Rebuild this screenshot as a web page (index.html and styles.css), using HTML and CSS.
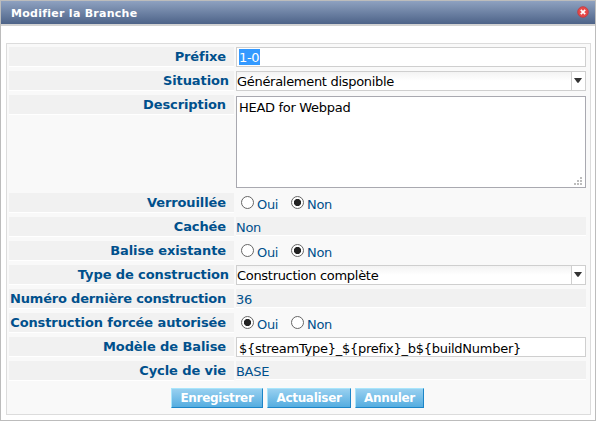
FILE: index.html
```html
<!DOCTYPE html>
<html lang="fr">
<head>
<meta charset="utf-8">
<title>Modifier la Branche</title>
<link rel="stylesheet" href="styles.css">
</head>
<body>
<div class="window">
  <header class="titlebar">
    <h1>Modifier la Branche</h1>
    <svg class="close" width="12" height="12" viewBox="0 0 12 12"><circle cx="6" cy="6" r="5.3" fill="#e64a4a" stroke="#c93538" stroke-width=".8"/><path d="M3.8 3.8l4.4 4.4M8.2 3.8L3.8 8.2" stroke="#fff" stroke-width="1.7"/></svg>
  </header>
  <main class="panel">
    <div class="form">
      <div class="label">Préfixe</div>
      <div class="field input"><span class="selected">1-0</span></div>

      <div class="label wide">Situation</div>
      <div class="field select"><span class="choice">Généralement disponible</span><span class="arrow"><svg width="8" height="5" viewBox="0 0 8 5"><path d="M0 0h8L4.6 4.8H3.4z" fill="#333"/></svg></span></div>

      <div class="label">Description</div>
      <div class="field textarea">HEAD for Webpad
        <svg class="grip" width="8" height="8" viewBox="0 0 8 8" fill="#bdbdbd"><path d="M6 0h2v2H6zM3 3h2v2H3zM6 3h2v2H6zM0 6h2v2H0zM3 6h2v2H3zM6 6h2v2H6z"/></svg>
      </div>

      <div class="label">Verrouillée</div>
      <div class="radios"><i class="radio"></i><span class="oui">Oui</span><i class="radio on"></i><span>Non</span></div>

      <div class="label">Cachée</div>
      <div class="value">Non</div>

      <div class="label">Balise existante</div>
      <div class="radios"><i class="radio"></i><span class="oui">Oui</span><i class="radio on"></i><span>Non</span></div>

      <div class="label wide">Type de construction</div>
      <div class="field select"><span class="choice">Construction complète</span><span class="arrow"><svg width="8" height="5" viewBox="0 0 8 5"><path d="M0 0h8L4.6 4.8H3.4z" fill="#333"/></svg></span></div>

      <div class="label long">Numéro dernière construction</div>
      <div class="value">36</div>

      <div class="label">Construction forcée autorisée</div>
      <div class="radios"><i class="radio on"></i><span class="oui">Oui</span><i class="radio"></i><span>Non</span></div>

      <div class="label">Modèle de Balise</div>
      <div class="field input template">${streamType}_${prefix}_b${buildNumber}</div>

      <div class="label">Cycle de vie</div>
      <div class="value">BASE</div>
    </div>
    <div class="actions">
      <button class="save">Enregistrer</button>
      <button class="refresh">Actualiser</button>
      <button class="cancel">Annuler</button>
    </div>
  </main>
</div>
</body>
</html>
```

FILE: styles.css
```css
* { box-sizing: border-box; }
body {
  margin: 0;
  background: #fff;
  color: #00508c;
  font: 13px/19px "DejaVu Sans", Verdana, sans-serif;
  letter-spacing: -.3px;
}
.window {
  width: 596px;
  height: 421px;
  border: 1px solid #bcbcbc;
}
.titlebar {
  display: flex;
  align-items: center;
  justify-content: space-between;
  height: 25px;
  padding: 0 6px 0 10px;
  border-bottom: 2px solid #d2d2d2;
  background: linear-gradient(#8ea1c0, #4d6388);
}
.titlebar h1 {
  margin: 3px 0 0;
  color: #fff;
  font-size: 11px;
  line-height: 16px;
  letter-spacing: .27px;
}
.close { margin-top: -2px; }
.panel {
  width: 585px;
  height: 372px;
  margin: 17px 0 0 5px;
  padding: 3px 4px 0 2px;
  border: 1px solid #dcdcdc;
  background: #f9f9f9;
}
.form {
  display: grid;
  grid-template-columns: 225px 350px;
  grid-template-rows: 20px 20px 94px repeat(8, 20px);
  gap: 4px 2px;
}
.label {
  height: 20px;
  padding-right: 8px;
  border-bottom: 1px solid #fff;
  background: #f1f1f1;
  font-weight: bold;
  text-align: right;
  white-space: nowrap;
  letter-spacing: -.1px;
}
.label.wide { padding-right: 5px; }
.label.long { letter-spacing: -.19px; }
.value {
  height: 19px;
  padding-top: 1px;
  border-bottom: 1px solid #fff;
  background: #f1f1f1;
}
.field {
  border: 1px solid #cfcfcf;
  background: #fff;
  color: #000;
  white-space: nowrap;
}
.input { padding: 1px 2px; }
.template { letter-spacing: -.27px; }
.selected {
  display: block;
  width: 21px;
  height: 16px;
  background: #3399ff;
  color: #fff;
  line-height: 17px;
}
.select {
  display: flex;
  background: linear-gradient(#f3f3f3, #fff 9px);
}
.choice { flex: 1; }
.arrow {
  display: flex;
  width: 14px;
  padding: 6px 0 0 2px;
  border-left: 1px solid #cfcfcf;
  background: #fff;
}
.arrow svg { display: block; }
.textarea {
  position: relative;
  height: 92px;
  margin-top: 1px;
  padding: 1px 2px;
  border-color: #a9a9b0;
}
.grip {
  position: absolute;
  right: 3px;
  bottom: 2px;
}
.radios { display: flex; padding-left: 5px; }
.radios span { margin-left: 3px; padding-top: 2px; }
.radios .oui { width: 34px; }
.radio {
  width: 13px;
  height: 13px;
  margin-top: 3px;
  border: 1px solid #666;
  border-radius: 50%;
  background: #fff;
}
.radio.on { background: radial-gradient(circle, #222 3.2px, #fff 4px); }
.actions {
  display: flex;
  gap: 4px;
  margin: 7px 0 0 162px;
}
.actions button {
  height: 20px;
  padding: 0;
  border: 1px solid;
  border-color: #a9e5fb #1c85c7 #1c85c7 #a9e5fb;
  background: linear-gradient(#98d0f0, #55ade0);
  color: #fff;
  font: bold 12px/18px "DejaVu Sans", Verdana, sans-serif;
  letter-spacing: -.3px;
}
.save { width: 92px; }
.refresh { width: 84px; }
.cancel { width: 69px; }
```
